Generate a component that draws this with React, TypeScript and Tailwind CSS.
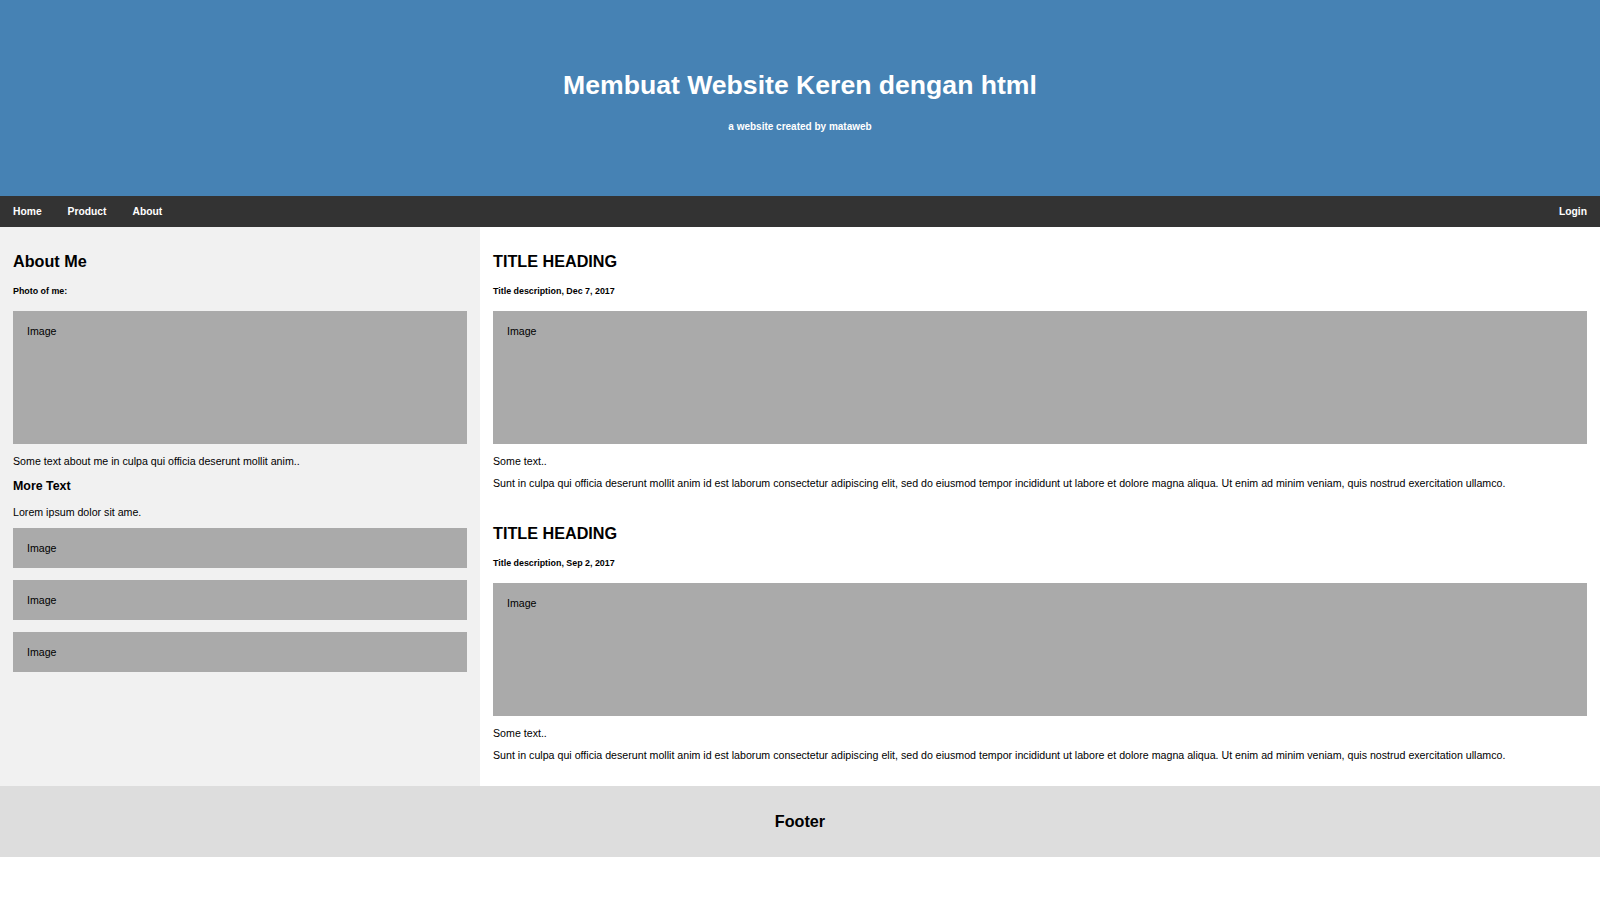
import React from 'react';

const font = { fontFamily: '"Liberation Sans", Arial, sans-serif' };

const FakeImg: React.FC<{ tall?: boolean; className?: string }> = ({ tall, className = '' }) => (
  <div
    className={`bg-[#aaaaaa] px-[14px] text-[10.6px] leading-[12px] text-black ${
      tall ? 'h-[133px] pt-[14px]' : 'h-[40px] flex items-center'
    } ${className}`}
  >
    Image
  </div>
);

const Post: React.FC<{ date: string; className?: string }> = ({ date, className = '' }) => (
  <article className={className}>
    <h2 className="text-[16.2px] font-bold leading-[18px] text-black">TITLE HEADING</h2>
    <h5 className="mt-[16px] text-[8.9px] font-bold leading-[10px] text-black">Title description, {date}</h5>
    <FakeImg tall className="mt-[15px]" />
    <p className="mt-[11px] text-[10.65px] leading-[12px] text-black">Some text..</p>
    <p className="mt-[10px] text-[10.65px] leading-[12px] text-black">
      Sunt in culpa qui officia deserunt mollit anim id est laborum consectetur adipiscing elit, sed do eiusmod tempor
      incididunt ut labore et dolore magna aliqua. Ut enim ad minim veniam, quis nostrud exercitation ullamco.
    </p>
  </article>
);

const App: React.FC = () => {
  return (
    <div className="w-[1600px] min-h-[900px] bg-white" style={font}>
      <header className="bg-[#4682b4] h-[196px] pt-[70px] text-center text-white">
        <h1 className="text-[26.6px] font-bold leading-[30px]">Membuat Website Keren dengan html</h1>
        <p className="mt-[21px] text-[10px] font-bold leading-[12px]">a website created by mataweb</p>
      </header>

      <nav className="bg-[#333333] h-[31px] flex items-center text-white text-[10.3px] font-bold">
        <a className="px-[13px]">Home</a>
        <a className="px-[13px]">Product</a>
        <a className="px-[13px]">About</a>
        <a className="ml-auto px-[13px]">Login</a>
      </nav>

      <div className="flex">
        <aside className="w-[480px] shrink-0 bg-[#f1f1f1] px-[13px] pt-[25px] pb-[13px]">
          <h2 className="text-[16.2px] font-bold leading-[18px] text-black">About Me</h2>
          <h5 className="mt-[16px] text-[8.9px] font-bold leading-[10px] text-black">Photo of me:</h5>
          <FakeImg tall className="mt-[15px]" />
          <p className="mt-[11px] text-[10.65px] leading-[12px] text-black">
            Some text about me in culpa qui officia deserunt mollit anim..
          </p>
          <h3 className="mt-[12px] text-[12.4px] font-bold leading-[14px] text-black">More Text</h3>
          <p className="mt-[13px] text-[10.65px] leading-[12px] text-black">Lorem ipsum dolor sit ame.</p>
          <FakeImg className="mt-[10px]" />
          <FakeImg className="mt-[12px]" />
          <FakeImg className="mt-[12px]" />
        </aside>

        <main className="flex-1 bg-white px-[13px] pt-[25px] pb-[25px]">
          <Post date="Dec 7, 2017" />
          <Post date="Sep 2, 2017" className="mt-[35px]" />
        </main>
      </div>

      <footer className="bg-[#dddddd] h-[71px] pb-[1px] flex items-center justify-center">
        <h2 className="text-[16.2px] font-bold leading-[18px] text-black">Footer</h2>
      </footer>
    </div>
  );
};

export default App;
